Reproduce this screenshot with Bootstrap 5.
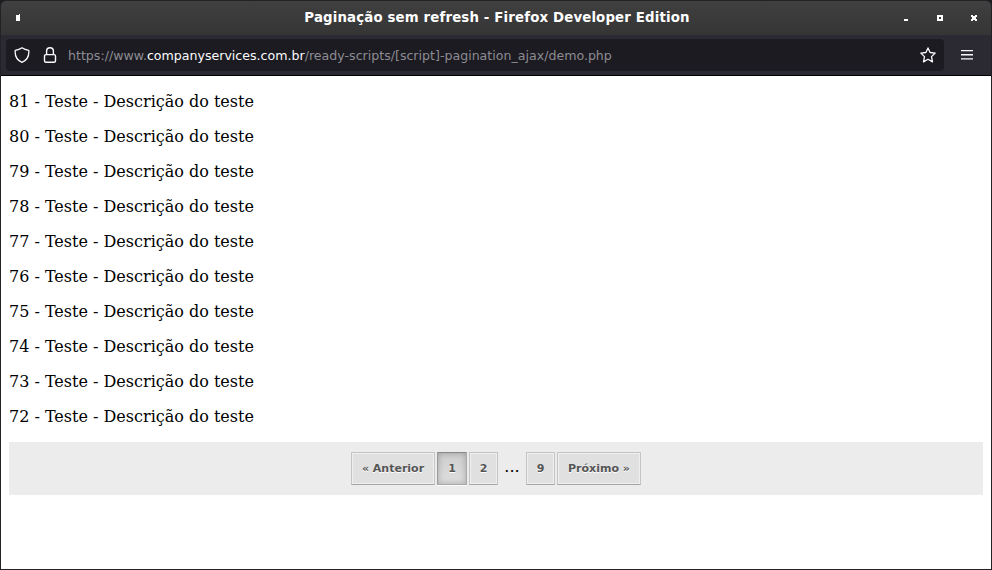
<!DOCTYPE html>
<html lang="pt-BR">
<head>
<meta charset="utf-8">
<title>Paginação sem refresh</title>
<link href="https://cdn.jsdelivr.net/npm/bootstrap@5.3.0/dist/css/bootstrap.min.css" rel="stylesheet">
<style>
html, body { height: 570px; }
body { background: #1d1c20; font-family: "DejaVu Sans", sans-serif; }
.window { height: 570px; border: 1px solid #232125; border-radius: 5px 5px 0 0; background: #232125; }
.titlebar { height: 34px; background: linear-gradient(#404040, #353535); border-radius: 5px 5px 0 0; color: #fff; padding: 0 11px 0 14px; }
.titlebar svg, .toolbar svg { display: block; flex: none; }
.win-title { font-size: 13.33px; font-weight: 700; line-height: 16px; padding-left: 73px; letter-spacing: .148px; }
.toolbar { height: 41px; background: #2b2a33; border-bottom: 1px solid #000; padding: 4px 16px 4px 5px; color: #fbfbfe; }
.urlbar { height: 32px; width: 938px; background: #1c1b22; border-radius: 4px; padding: 0 8px; }
.url { font-size: 12.6px; color: #8d8c92; line-height: 16px; margin: 2px 0 0 8px; white-space: nowrap; }
.url span { color: #fbfbfe; }
.lock { margin-left: 10px; }
.page { background: #fff; color: #000; padding: 16px 8px 0; height: 493px; font-family: "DejaVu Serif", serif; font-size: 16px; line-height: 19px; }
.page p { margin-bottom: 16px; }
.pager { background: #ececec; height: 53px; gap: 2px; padding: 10px 0; font-family: "DejaVu Sans", sans-serif; }
.pager .pg { display: block; height: 33px; border: 1px solid #c4c4c4; border-bottom-color: #a4a4a4; border-radius: 1px; background: #e0e0e0; color: #555; font-size: 11px; font-weight: 700; line-height: 31px; text-align: center; text-decoration: none; text-shadow: 0 1px 0 #fff; box-shadow: inset 0 0 1px 1px rgba(255,255,255,.55); }
.pager .pg-wide { width: 84px; }
.pager .pg-num { width: 29px; }
.pager .pg-on { width: 30px; border-color: #888 #aaa #aaa #999; background: linear-gradient(#cecece, #dedede); box-shadow: inset 0 0 6px rgba(0,0,0,.25), 0 1px 0 rgba(255,255,255,.8); }
.pager .dots { width: 24px; font-family: "DejaVu Serif", serif; font-size: 16px; line-height: 29px; text-align: center; color: #000; }
</style>
<script src="https://cdn.jsdelivr.net/npm/bootstrap@5.3.0/dist/js/bootstrap.bundle.min.js"></script>
</head>
<body class="m-0 overflow-hidden">
<div class="window overflow-hidden">
  <header class="titlebar d-flex align-items-center justify-content-between">
    <svg width="6" height="8" fill="#fff" shape-rendering="crispEdges"><path d="M1 1h3V0h1v7H1z"/></svg>
    <div class="win-title">Paginação sem refresh - Firefox Developer Edition</div>
    <svg width="80" height="8" fill="#fff" shape-rendering="crispEdges"><path d="M4 5h4v2H4z"/><path fill-rule="evenodd" d="M37 1h6v6h-6zM39 3v2h2V3z"/><path d="M71 1h2v1h2V1h2v2h-1v2h1v2h-2V6h-2v1h-2V5h1V3h-1z"/></svg>
  </header>
  <nav class="toolbar d-flex align-items-center justify-content-between">
    <div class="urlbar d-flex align-items-center">
      <svg width="16" height="16" fill="none" stroke="#fbfbfe" stroke-width="1.3" stroke-linejoin="round"><path d="M8 .8C6.3 2 3.7 3 1.2 3.4.8 8.3 2.900 13.200 8 15.300c5.100-2.100 7.200-7 6.800-11.900C12.300 3 9.700 2 8 .8z"/></svg>
      <svg class="lock" width="20" height="16" fill="none" stroke="#fbfbfe" stroke-width="1.4"><rect x="4.500" y="7.600" width="11" height="7.700" rx="1.500"/><path d="M6.600 7.500V4.200a3.400 3.400 0 0 1 6.800 0v3.300"/></svg>
      <div class="url flex-grow-1">https://www.<span>companyservices.com.br</span>/ready-scripts/[script]-pagination_ajax/demo.php</div>
      <svg width="16" height="16" fill="none" stroke="#fbfbfe" stroke-width="1.3" stroke-linejoin="round"><path d="M8 .9 10.100 5.500 15.200 6.100 11.500 9.600 12.500 14.900 8 12.300 3.500 14.900 4.500 9.600.8 6.100 5.900 5.500z"/></svg>
    </div>
    <svg width="16" height="16" fill="#fbfbfe"><path d="M2 3h12v1.300H2zM2 7.100h12v1.300H2zM2 11.200h12v1.300H2z"/></svg>
  </nav>
  <main class="page">
    <p>81 - Teste - Descrição do teste</p>
    <p>80 - Teste - Descrição do teste</p>
    <p>79 - Teste - Descrição do teste</p>
    <p>78 - Teste - Descrição do teste</p>
    <p>77 - Teste - Descrição do teste</p>
    <p>76 - Teste - Descrição do teste</p>
    <p>75 - Teste - Descrição do teste</p>
    <p>74 - Teste - Descrição do teste</p>
    <p>73 - Teste - Descrição do teste</p>
    <p>72 - Teste - Descrição do teste</p>
    <nav class="pager d-flex justify-content-center">
      <a class="pg pg-wide">« Anterior</a>
      <a class="pg pg-on">1</a>
      <a class="pg pg-num">2</a>
      <span class="dots">...</span>
      <a class="pg pg-num">9</a>
      <a class="pg pg-wide">Próximo »</a>
    </nav>
  </main>
</div>
</body>
</html>
